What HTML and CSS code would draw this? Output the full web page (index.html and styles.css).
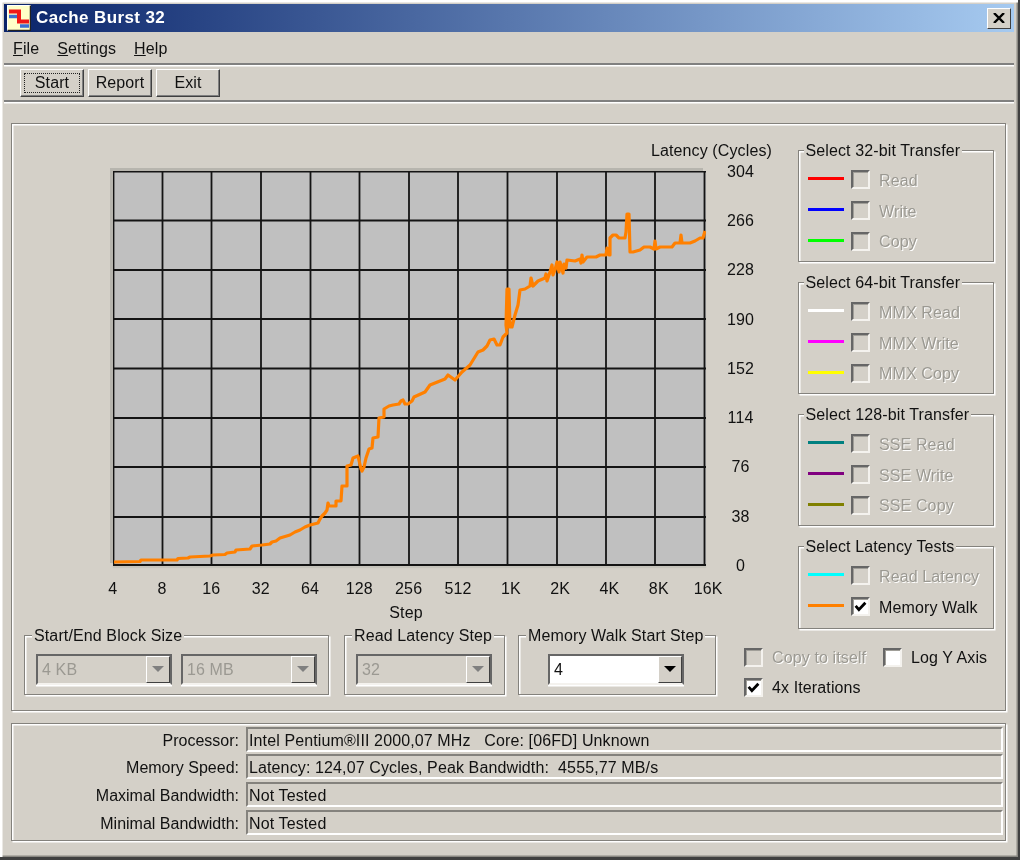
FILE: index.html
```html
<!DOCTYPE html>
<html lang="en">
<head>
<meta charset="utf-8">
<title>Cache Burst 32</title>
<link rel="stylesheet" href="styles.css">
</head>
<body>
<div class="window">
  <header class="titlebar">
    <svg class="app-icon" viewBox="0 0 24 26">
      <rect x="0.5" y="0.5" width="23" height="25" fill="#ffffc8" stroke="#fff"/>
      <path d="M23.5 0.5V25.5H0.5" fill="none" stroke="#222" stroke-width="1.5"/>
      <path d="M2 11.500H10M13 21H22" fill="none" stroke="#3c70d0" stroke-width="3.500"/>
      <path d="M2 6.500H12V16.500H22" fill="none" stroke="#f01818" stroke-width="4"/>
    </svg>
    <span class="title-text">Cache Burst 32</span>
    <span class="close-btn">
      <svg viewBox="0 0 12 10" class="close-x"><path d="M1 0L11 10M11 0L1 10" stroke="#000" stroke-width="2.4"/></svg>
    </span>
  </header>

  <nav class="menubar">
    <span><u>F</u>ile</span>
    <span><u>S</u>ettings</span>
    <span><u>H</u>elp</span>
  </nav>

  <div class="toolbar">
    <button class="btn btn-focus"><span>Start</span></button>
    <button class="btn"><span>Report</span></button>
    <button class="btn"><span>Exit</span></button>
  </div>

  <main class="panel main-panel">
    <div class="upper">
      <section class="chart-col">
        <div class="axis-title">Latency (Cycles)</div>
        <div class="plot-row">
          <svg class="plot" viewBox="0 0 593 395">
            <rect width="593" height="395" fill="#c0c0c0"/>
            <path class="grid" d="M0.500 0V395M49.500 0V395M98.500 0V395M148 0V395M197.500 0V395M246.500 0V395M296 0V395M345 0V395M394.500 0V395M444 0V395M493 0V395M542 0V395M591.500 0V395M0 0.500H593M0 49.500H593M0 99H593M0 148H593M0 197.500H593M0 247H593M0 296H593M0 346H593M0 394H593"/>
            <polyline class="trace" transform="translate(-113 -171)" points="114,562 140,561.500 141,560 177,560 178,558.500 188,558 190,557 210,556 213,555 225,554.500 227,553 235,552 236,550 250,549 252,546 262,545 270,544 272,542 276,541 280,538 290,535 295,532 300,530 305,527 310,525 318,523 320,519 322,516 325,513 327,510 328,503 329,506 336,506 336,501 341,501 342,486 347,486 347,466 351,465 353,458 358,456 361,469 362,471 364,467 366,458 369,449 372,448 373,438 378,437 379,418 384,417 384,409 389,406 393,405 399,404 401,401 403,400 405,404 408,404 412,401 414,397 425,392 430,385 445,379 448,375 455,380 462,372 470,365 478,352 483,350 487,346 490,340 494,339 497,345 500,345 503,337 507,333 506,325 507,289 509,289 507,329 509,289 510,327 512,327 515,315 518,305 520,290 525,289 530,286 531,278 533,286 538,281 545,278 546,274 547,281 550,272 552,265 553,275 555,270 557,262 559,272 560,262 563,273 564,264 566,268 567,260 575,261 580,259 581,263 582,255 583,262 587,257 596,257 600,255 606,255 607,248 609,255 610,255 610,238 613,235 616,235 619,238 625,238 626,232 627,214 629,214 630,252 633,252 640,250 644,247 650,247 654,249 655,241 656,249 660,247 672,247 675,243 680,243 681,235 682,243 690,243 695,241 700,238 703,238 705,231"/>
          </svg>
          <div class="y-labels">
            <span>304</span><span>266</span><span>228</span><span>190</span><span>152</span><span>114</span><span>76</span><span>38</span><span>0</span>
          </div>
        </div>
        <div class="x-labels">
          <span>4</span><span>8</span><span>16</span><span>32</span><span>64</span><span>128</span><span>256</span><span>512</span><span class="k">1K</span><span class="k">2K</span><span class="k">4K</span><span class="k">8K</span><span class="k">16K</span>
        </div>
        <div class="x-title">Step</div>
      </section>

      <aside class="sidebar">
        <section class="group legend-group">
          <h2 class="group-title">Select 32-bit Transfer</h2>
          <div class="legend-row"><i class="swatch s-red"></i><span class="cb"></span><span class="disabled">Read</span></div>
          <div class="legend-row"><i class="swatch s-blue"></i><span class="cb"></span><span class="disabled">Write</span></div>
          <div class="legend-row"><i class="swatch s-green"></i><span class="cb"></span><span class="disabled">Copy</span></div>
        </section>
        <section class="group legend-group">
          <h2 class="group-title">Select 64-bit Transfer</h2>
          <div class="legend-row"><i class="swatch s-white"></i><span class="cb"></span><span class="disabled">MMX Read</span></div>
          <div class="legend-row"><i class="swatch s-magenta"></i><span class="cb"></span><span class="disabled">MMX Write</span></div>
          <div class="legend-row"><i class="swatch s-yellow"></i><span class="cb"></span><span class="disabled">MMX Copy</span></div>
        </section>
        <section class="group legend-group">
          <h2 class="group-title">Select 128-bit Transfer</h2>
          <div class="legend-row"><i class="swatch s-teal"></i><span class="cb"></span><span class="disabled">SSE Read</span></div>
          <div class="legend-row"><i class="swatch s-purple"></i><span class="cb"></span><span class="disabled">SSE Write</span></div>
          <div class="legend-row"><i class="swatch s-olive"></i><span class="cb"></span><span class="disabled">SSE Copy</span></div>
        </section>
        <section class="group legend-group short">
          <h2 class="group-title">Select Latency Tests</h2>
          <div class="legend-row"><i class="swatch s-cyan"></i><span class="cb"></span><span class="disabled">Read Latency</span></div>
          <div class="legend-row"><i class="swatch s-orange"></i><span class="cb on"><svg viewBox="0 0 12 10"><path d="M1.500 4.500L4.500 8L10.500 1.500" fill="none" stroke="#000" stroke-width="2.600"/></svg></span><span>Memory Walk</span></div>
        </section>
      </aside>
    </div>

    <div class="lower">
      <section class="group combo-group g-size">
        <h2 class="group-title">Start/End Block Size</h2>
        <div class="combo off"><span class="combo-value">4 KB</span><span class="combo-btn"><i></i></span></div>
        <div class="combo off"><span class="combo-value">16 MB</span><span class="combo-btn"><i></i></span></div>
      </section>
      <section class="group combo-group g-read">
        <h2 class="group-title">Read Latency Step</h2>
        <div class="combo off"><span class="combo-value">32</span><span class="combo-btn"><i></i></span></div>
      </section>
      <section class="group combo-group g-walk">
        <h2 class="group-title">Memory Walk Start Step</h2>
        <div class="combo"><span class="combo-value">4</span><span class="combo-btn"><i></i></span></div>
      </section>
      <div class="options">
        <label class="opt"><span class="cb"></span><span class="disabled">Copy to itself</span></label>
        <label class="opt"><span class="cb on"></span><span>Log Y Axis</span></label>
        <label class="opt"><span class="cb on"><svg viewBox="0 0 12 10"><path d="M1.500 4.500L4.500 8L10.500 1.500" fill="none" stroke="#000" stroke-width="2.600"/></svg></span><span>4x Iterations</span></label>
      </div>
    </div>
  </main>

  <section class="panel status-panel">
    <div class="status-row"><span class="status-label">Processor:</span><span class="status-field">Intel Pentium®III 2000,07 MHz&nbsp;&nbsp; Core: [06FD] Unknown</span></div>
    <div class="status-row"><span class="status-label">Memory Speed:</span><span class="status-field">Latency: 124,07 Cycles, Peak Bandwidth:&nbsp; 4555,77 MB/s</span></div>
    <div class="status-row"><span class="status-label">Maximal Bandwidth:</span><span class="status-field">Not Tested</span></div>
    <div class="status-row"><span class="status-label">Minimal Bandwidth:</span><span class="status-field">Not Tested</span></div>
  </section>
</div>
</body>
</html>
```
FILE: styles.css
```css
* { box-sizing: border-box; }
html, body { margin: 0; padding: 0; background: #d4d0c8; }
body {
  width: 1020px;
  height: 860px;
  overflow: hidden;
  font-family: "Liberation Sans", Arial, sans-serif;
  font-size: 16px;
  letter-spacing: .12px;
  color: #111;
}
.window {
  width: 1020px;
  height: 860px;
  padding: 4px 4.500px 0 4px;
  background: #d4d0c8;
  border-right: 2.500px solid #404040;
  border-bottom: 3px solid #404040;
  box-shadow: inset 2.500px 2.500px 0 #fff, inset -1.500px -1.500px 0 #8a8882;
  filter: blur(.4px);
}

/* title bar */
.titlebar {
  height: 28px;
  display: flex;
  align-items: center;
  padding-left: 3px;
  background: linear-gradient(to right, #0a246a, #a6caf0);
}
.app-icon { width: 24px; height: 26px; flex: none; }
.title-text {
  margin-left: 5px;
  color: #fff;
  font-weight: 700;
  font-size: 17px;
  letter-spacing: .38px;
}
.close-btn {
  margin-left: auto;
  margin-right: 3px;
  width: 24px;
  height: 21px;
  display: flex;
  align-items: center;
  justify-content: center;
  background: #d4d0c8;
  border: 1.500px solid;
  border-color: #fff #404040 #404040 #fff;
}
.close-x { width: 12px; height: 10px; }

/* menu */
.menubar {
  height: 31px;
  display: flex;
  align-items: center;
  gap: 18px;
  padding: 2px 0 0 9px;
}

/* toolbar */
.toolbar {
  height: 39px;
  display: flex;
  gap: 4px;
  padding: 4px 0 0 16px;
  border-top: 2px solid #808080;
  border-bottom: 2px solid #808080;
  box-shadow: inset 0 1.500px 0 #fff, 0 1.500px 0 #fff;
}
.btn {
  width: 64px;
  height: 28px;
  padding: 0;
  font: inherit;
  letter-spacing: inherit;
  color: #111;
  background: #d4d0c8;
  border: 1.500px solid;
  border-color: #fff #404040 #404040 #fff;
  box-shadow: inset -1px -1px 0 #808080;
}
.btn-focus span {
  display: block;
  margin: 2px 3px;
  line-height: 20px;
  outline: 1.500px dotted #222;
  outline-offset: -1px;
}

/* etched panels */
.panel {
  border: 1.500px solid #84827d;
  box-shadow: 1.500px 1.500px 0 #fff, inset 1.500px 1.500px 0 #fff;
}
.main-panel {
  width: 995px;
  height: 588px;
  margin: 21px 0 0 7px;
  padding: .5px 0 0 1px;
}
.upper { display: flex; height: 504px; }
.chart-col { width: 785px; flex: none; padding-top: 16px; }
.axis-title {
  height: 20px;
  line-height: 20px;
  text-align: right;
  padding-right: 26px;
}
.plot-row { display: flex; margin: 10px 0 0 99.500px; }
.plot {
  width: 593px;
  height: 395px;
  flex: none;
  box-shadow: -3px -3px 0 #b7b5ae, 0 2px 1px #c6c4bc;
}
.grid { fill: none; stroke: #141414; stroke-width: 1.800; }
.trace { fill: none; stroke: #ff8000; stroke-width: 3.200; stroke-linejoin: round; }
.y-labels {
  width: 70px;
  margin: -24.600px 0;
  display: flex;
  flex-direction: column;
  text-align: center;
}
.y-labels span { height: 49.250px; line-height: 52px; }
.x-labels { display: flex; margin: 13px 0 0 75px; height: 20px; line-height: 20px; }
.x-labels span { width: 49.330px; flex: none; text-align: center; }
.x-labels .k { padding-left: 7px; }
.x-title {
  width: 60px;
  height: 20px;
  margin: 4px 0 0 363px;
  line-height: 20px;
  text-align: center;
}

/* groups */
.group {
  position: relative;
  border: 1.500px solid #84827d;
  box-shadow: 1.500px 1.500px 0 #fff, inset 1.500px 1.500px 0 #fff;
}
.group-title {
  position: absolute;
  top: -9px;
  left: 5px;
  margin: 0;
  padding: 0 2px;
  font: inherit;
  line-height: 18px;
  white-space: nowrap;
  background: #d4d0c8;
}
.sidebar {
  width: 196px;
  margin-left: -.5px;
  padding-top: 25px;
  display: flex;
  flex-direction: column;
  gap: 20px;
}
.legend-group { height: 112px; padding: 15px 0 0 9px; }
.legend-group.short { height: 83px; }
.legend-row { height: 30.700px; display: flex; align-items: center; }
.swatch {
  width: 36px;
  height: 3px;
  flex: none;
  margin: -4px 7px 0 0;
}
.s-red { background: #ff0000; }
.s-blue { background: #0000ff; }
.s-green { background: #00ff00; }
.s-white { background: #ffffff; }
.s-magenta { background: #ff00ff; }
.s-yellow { background: #ffff00; }
.s-teal { background: #008080; }
.s-purple { background: #800080; }
.s-olive { background: #808000; }
.s-cyan { background: #00ffff; }
.s-orange { background: #ff8000; }

.cb {
  width: 19px;
  height: 19px;
  flex: none;
  display: flex;
  align-items: center;
  justify-content: center;
  margin: -2px 9.500px 0 0;
  border: 2px solid;
  border-color: #666 #f4f2ee #f4f2ee #666;
  box-shadow: inset 1px 1px 0 #a09e98;
}
.cb.on { background: #fff; }
.cb svg { width: 13px; height: 11px; }
.disabled { color: #9b9992; text-shadow: 1px 1px 0 #fff; }

/* lower row */
.lower { display: flex; margin: 6px 0 0 11px; height: 60px; }
.combo-group {
  height: 60px;
  display: flex;
  gap: 9px;
  padding: 18px 0 0 11px;
}
.combo-group .group-title { left: 7px; }
.g-size { width: 305px; }
.g-read { width: 161px; margin-left: 15px; }
.g-walk { width: 198px; margin-left: 13px; padding-left: 29px; }
.combo {
  width: 136px;
  height: 31px;
  display: flex;
  background: #fff;
  border: 2px solid;
  border-color: #666 #666 #f4f2ee #666;
  box-shadow: 0 1.500px 0 #fff;
}
.combo.off { background: #d4d0c8; color: #9b9992; }
.combo-value { flex: 1; line-height: 28px; padding-left: 4px; }
.combo-btn {
  width: 24px;
  flex: none;
  display: flex;
  align-items: center;
  justify-content: center;
  background: #d4d0c8;
  border: 1.500px solid;
  border-color: #fff #404040 #404040 #fff;
}
.combo-btn i {
  width: 0;
  height: 0;
  border-style: solid;
  border-width: 6px 6.500px 0;
  border-color: #000 transparent transparent;
}
.combo.off .combo-btn i { border-top-color: #808080; }
.options {
  width: 260px;
  margin: 13px 0 0 28px;
  display: grid;
  grid-template-columns: 139px 1fr;
  grid-auto-rows: 30.500px;
}
.opt { display: flex; align-items: flex-start; line-height: 19px; }
.opt .cb { margin: 0 9px 0 0; }

/* status */
.status-panel {
  width: 995px;
  height: 118px;
  margin: 12px 0 0 7px;
  padding: 2.500px 0 0 1px;
  display: flex;
  flex-direction: column;
  gap: 2.700px;
}
.status-row { display: flex; height: 25px; line-height: 24px; }
.status-label { width: 226px; text-align: right; flex: none; line-height: 27px; letter-spacing: 0; }
.status-field {
  width: 756.500px;
  margin-left: 7px;
  padding-left: 1px;
  white-space: nowrap;
  border: 2px solid;
  border-color: #84827d #fff #fff #84827d;
}
```
